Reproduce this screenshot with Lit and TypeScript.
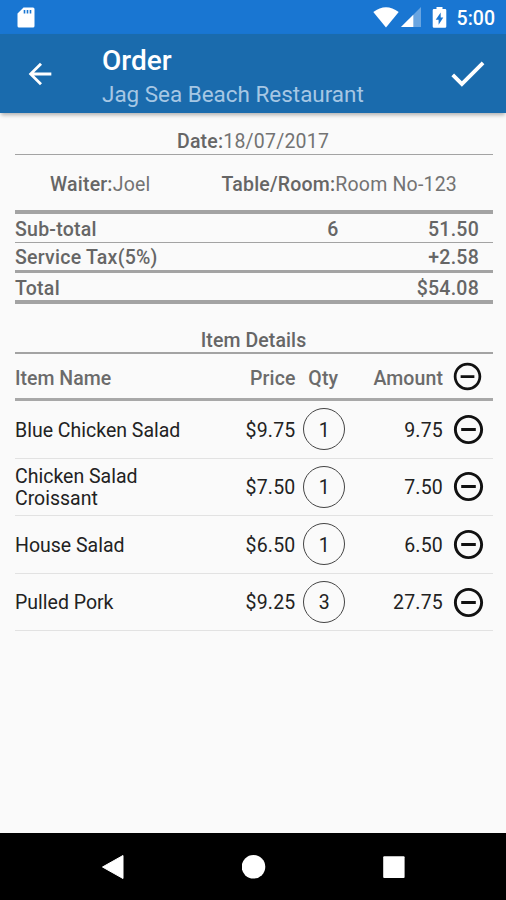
import { LitElement, html, css, svg } from "lit";
import { customElement } from "lit/decorators.js";

interface Item {
  name: string;
  price: string;
  qty: number;
  amount: string;
}

const ITEMS: Item[] = [
  { name: "Blue Chicken Salad", price: "$9.75", qty: 1, amount: "9.75" },
  { name: "Chicken Salad Croissant", price: "$7.50", qty: 1, amount: "7.50" },
  { name: "House Salad", price: "$6.50", qty: 1, amount: "6.50" },
  { name: "Pulled Pork", price: "$9.25", qty: 3, amount: "27.75" },
];

const minus = svg`<path d="M7 11v2h10v-2H7zm5-9C6.48 2 2 6.48 2 12s4.48 10 10 10 10-4.48 10-10S17.52 2 12 2zm0 18c-4.41 0-8-3.59-8-8s3.59-8 8-8 8 3.59 8 8-3.59 8-8 8z"/>`;

@customElement("status-bar")
class StatusBar extends LitElement {
  static styles = css`
    :host { display: flex; align-items: center; height: 34px; background: #1976d2; color: #fff; padding: 0 11px 0 17px; box-sizing: border-box; }
    svg { display: block; fill: #fff; flex: none; }
    .space { flex: 1; }
    .wifi { margin-right: 2px; }
    .cell { margin-right: 11px; }
    .batt { margin-right: 10px; }
    .time { font-size: 19.5px; font-weight: 500; line-height: 32px; padding-top: 4px; }
  `;
  render() {
    return html`
      <svg width="18" height="21" viewBox="0 0 18 21"><path fill-rule="evenodd" d="M6.5 .5H16q1.500 0 1.500 1.500V19q0 1.500-1.500 1.500H2Q.5 20.500.5 19V6.500zM6.700 3V6.500H8.300V3zM9.700 3V6.500H11.300V3zM12.700 3V6.500H14.300V3z"/></svg>
      <div class="space"></div>
      <svg class="wifi" width="26" height="21" viewBox="0 0 26 21"><path d="M.3 5Q13-4.500 25.700 5L13 20.600z"/></svg>
      <svg class="cell" width="20" height="20" viewBox="0 0 20 20"><path opacity=".35" d="M20 0V20H0z"/><path d="M12.300 7.700V20H0z"/></svg>
      <svg class="batt" width="15" height="21" viewBox="0 0 15 21"><path fill-rule="evenodd" d="M4.500 0h6v2H13q1.300 0 1.300 1.300V19.500q0 1.300-1.300 1.300H2Q.7 20.800.7 19.500V3.300Q.7 2 2 2h2.500zM8.700 5.500 3.700 12.700H6.600V17.700L11.300 10.500H8.700z"/></svg>
      <div class="time">5:00</div>
    `;
  }
}

@customElement("app-bar")
class AppBar extends LitElement {
  static styles = css`
    :host { display: flex; align-items: center; height: 79px; background: #1a6bad; color: #fff; box-sizing: border-box; padding: 0 16px 0 23px; box-shadow: 0 3px 4px -1px rgba(0,0,0,.3); }
    svg { display: block; fill: #fff; flex: none; }
    .titles { flex: 1; padding: 5px 0 0 45px; }
    .title { font-size: 28px; font-weight: 500; line-height: 36px; }
    .sub { font-size: 22.450px; line-height: 31px; color: #a6c7e4; }
  `;
  render() {
    return html`
      <svg width="34" height="34" viewBox="0 0 24 24"><path d="M20 11H7.830l5.590-5.590L12 4l-8 8 8 8 1.410-1.410L7.830 13H20v-2z"/></svg>
      <div class="titles">
        <div class="title">Order</div>
        <div class="sub">Jag Sea Beach Restaurant</div>
      </div>
      <svg width="45" height="45" viewBox="0 0 24 24"><path d="M9 16.170L4.830 12l-1.420 1.410L9 19 21 7l-1.410-1.410z"/></svg>
    `;
  }
}

@customElement("nav-bar")
class NavBar extends LitElement {
  static styles = css`
    :host { display: flex; align-items: center; justify-content: space-between; height: 67px; background: #000; padding: 0 101px; box-sizing: border-box; }
    svg { display: block; fill: #fff; }
  `;
  render() {
    return html`
      <svg width="24" height="26" viewBox="0 0 24 26"><path d="M22 1.500V24.500L1.500 13z" stroke="#fff" stroke-linejoin="round"/></svg>
      <svg width="24" height="24" viewBox="0 0 24 24"><circle cx="11.500" cy="11.800" r="11.800"/></svg>
      <svg width="22" height="22" viewBox="0 0 22 22"><rect x=".2" y=".2" width="21.400" height="21.800" rx="1"/></svg>
    `;
  }
}

@customElement("app-root")
class AppRoot extends LitElement {
  static styles = css`
    :host { display: flex; flex-direction: column; height: 900px; background: #fafafa; font-family: Roboto, sans-serif; overflow: hidden; }
    main { flex: 1; padding: 0 13px 0 15px; font-size: 19.500px; color: #737373; letter-spacing: .2px; line-height: 22.500px; }
    b { font-weight: 500; color: #666; }
    .bar { box-sizing: border-box; display: flex; align-items: center; border-bottom: 0 solid #a3a3a3; }
    .date { height: 42px; justify-content: center; border-width: 1.500px; padding: 17px 2px 0 0; }
    .people { height: 59px; border-width: 4px; padding: 5px 36px 0 35px; justify-content: space-between; letter-spacing: .2px; }
    .sum { display: grid; grid-template-columns: 1fr 60px 116px; font-weight: 500; color: #666; padding-right: 14px; letter-spacing: .25px; }
    .sum :nth-child(2) { text-align: center; }
    .sum :nth-child(3) { text-align: right; }
    .s1 { height: 29px; border-width: 1px; padding-top: 5px; }
    .s2 { height: 30px; border-width: 3px; padding-top: 3px; }
    .s3 { height: 31px; border-width: 4px; padding-top: 5px; }
    .details { height: 50px; justify-content: center; border-width: 2px; padding: 26px 1px 0 0; font-weight: 500; color: #666; letter-spacing: .1px; }
    .row { box-sizing: border-box; display: grid; grid-template-columns: 170px 110.500px 57.500px 90px 50px; align-items: center; height: 57.600px; border-bottom: 1.500px solid #e2e2e2; color: #222; letter-spacing: .2px; }
    .row span { padding-top: 3px; }
    .row .name { letter-spacing: 0; }
    .head { height: 47px; border-bottom: 3px solid #a8a8a8; font-weight: 500; color: #6b6b6b; letter-spacing: .1px; }
    .head span { padding-top: 6px; }
    .right { text-align: right; }
    .qty { justify-self: center; width: 42px; height: 42px; box-sizing: border-box; border: 1.200px solid #444; border-radius: 50%; display: grid; place-items: center; }
    .label { justify-self: center; margin-right: 2px; }
    .icon { display: block; justify-self: center; fill: #111; }
    .head .icon { margin-right: 2px; }
  `;
  render() {
    return html`
      <status-bar></status-bar>
      <app-bar></app-bar>
      <main>
        <div class="bar date"><b>Date:</b>18/07/2017</div>
        <div class="bar people"><span><b>Waiter:</b>Joel</span><span><b>Table/Room:</b>Room No-123</span></div>
        <div class="bar sum s1"><span>Sub-total</span><span>6</span><span>51.50</span></div>
        <div class="bar sum s2"><span>Service Tax(5%)</span><span></span><span>+2.58</span></div>
        <div class="bar sum s3"><span>Total</span><span></span><span>$54.08</span></div>
        <div class="bar details">Item Details</div>
        <div class="row head">
          <span class="name">Item Name</span><span class="right">Price</span><span class="label">Qty</span><span class="right">Amount</span>
          <svg class="icon" width="33" height="33" viewBox="0 0 24 24">${minus}</svg>
        </div>
        ${ITEMS.map((i) => html`
          <div class="row">
            <span class="name">${i.name}</span><span class="right">${i.price}</span><div class="qty"><span>${i.qty}</span></div><span class="right">${i.amount}</span>
            <svg class="icon" width="35" height="35" viewBox="0 0 24 24">${minus}</svg>
          </div>`)}
      </main>
      <nav-bar></nav-bar>
    `;
  }
}
